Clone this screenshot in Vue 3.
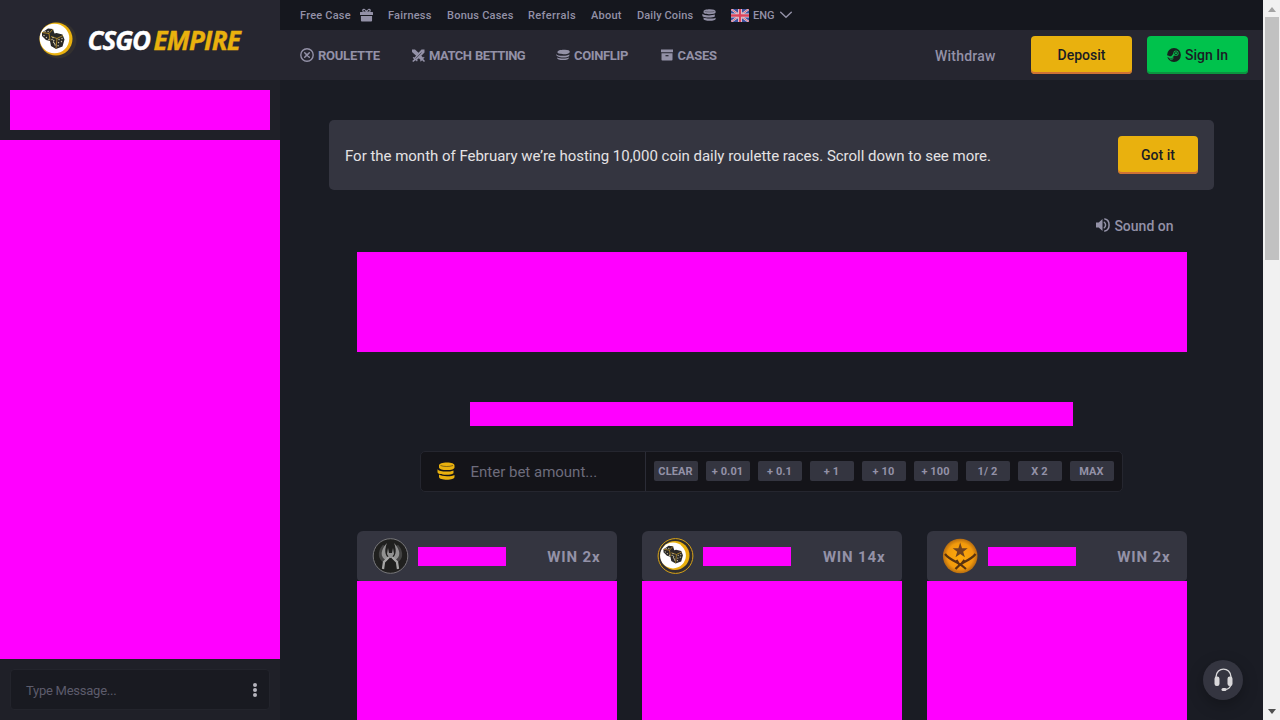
<script setup>
const topLinks = [
  { label: 'Free Case', w: 88, icon: 'gift' },
  { label: 'Fairness', w: 59 },
  { label: 'Bonus Cases', w: 81 },
  { label: 'Referrals', w: 63 },
  { label: 'About', w: 46 },
  { label: 'Daily Coins', w: 93.5, icon: 'coins' },
]
const games = [
  { label: 'ROULETTE', icon: 'roulette', w: 112 },
  { label: 'MATCH BETTING', icon: 'swords', w: 144 },
  { label: 'COINFLIP', icon: 'flip', w: 104.5 },
  { label: 'CASES', icon: 'box', w: 80.5 },
]
const chips = ['CLEAR', '+ 0.01', '+ 0.1', '+ 1', '+ 10', '+ 100', '1/ 2', 'X 2', 'MAX']
const bets = [
  { coin: 'ct', win: 'WIN 2x' },
  { coin: 'dice', win: 'WIN 14x' },
  { coin: 't', win: 'WIN 2x' },
]
</script>

<template>
  <div class="app">
    <svg class="defs" width="0" height="0">
      <defs>
        <radialGradient id="amber"><stop offset="0" stop-color="#ffa90c" /><stop offset=".75" stop-color="#f29a0c" /><stop offset="1" stop-color="#b56c10" /></radialGradient>
        <radialGradient id="steel"><stop offset="0" stop-color="#777" /><stop offset=".6" stop-color="#353535" /><stop offset="1" stop-color="#1c1c1c" /></radialGradient>
        <symbol id="dice" viewBox="0 0 24 22">
          <path fill="#292827" d="M1 5 7 1l5 .5 1.500 4.500 2-.5 6 1.500 2 5-2 7-6.500 2.500-5-3-1-5-4-1-4-4z" />
          <path fill="none" stroke="#c99c2c" stroke-width=".8" d="m1 5 7 1 4-4.500M8 6l1 7M10 9l6 2 6-3M16 11l-1 10" />
          <path fill="none" stroke="#c9bfa4" stroke-width="1.400" stroke-linecap="round" stroke-dasharray=".1 3" d="M4 4h6M3 8l5 4M11 12l4 7M18 12l-1 7M21 11l-1 6M12 10l2 8" />
        </symbol>
        <symbol id="coins" viewBox="0 0 18 18">
          <path fill="currentColor" d="M2 3.400C2 1.600 5.500.5 10 .5s7.500 1.100 7.500 2.900v2C17.500 7 14.200 8 10 8S2 7 2 5.400zM.500 7.200C2 9 5 9.600 9 9.600c3 0 5.500-.4 7.500-1.200v2.800c-1.500 1-4 1.600-7.500 1.600-4.700 0-8.500-1-8.500-2.800zM2 12.600c2 1.200 4.500 1.700 8 1.700s6-.4 7.500-1.300V15c0 1.700-3.300 2.700-7.500 2.700S2 16.600 2 14.900z" />
          <path fill="none" stroke="#17181d" stroke-width=".5" d="M3.500 3.500c3 1.300 9 1.400 12.500 0" />
        </symbol>
      </defs>
    </svg>

    <aside class="side">
      <div class="brand">
        <svg class="mark" viewBox="0 0 40 40" width="40" height="40">
          <circle cx="20" cy="20" r="18.500" fill="#34312f" />
          <circle cx="18" cy="19" r="16.500" fill="#e9b10e" />
          <circle cx="16.500" cy="18.500" r="14.800" fill="#fff" />
          <use href="#dice" x="2.500" y="7.500" width="25" height="22" />
        </svg>
        <div class="word"><span class="w1">CSGO</span><span class="w2">EMPIRE</span></div>
      </div>
      <div class="sideblock"></div>
      <div class="chat"></div>
      <div class="typer"><div class="field"><span class="tm">Type Message...</span><i class="dots"></i></div></div>
    </aside>

    <main class="page">
      <nav class="top">
        <div v-for="l in topLinks" :key="l.label" class="tl" :style="{ width: l.w + 'px' }">
          <span :class="['tlt', l.label.toLowerCase().replace(' ', '-')]">{{ l.label }}</span>
          <svg v-if="l.icon === 'gift'" class="gi" viewBox="0 0 14 14" width="13" height="14" preserveAspectRatio="none"><path fill="#9391a7" d="M.5 4H3C1.300 2 3 .3 5 1l2 1.500L9 1c2-.7 3.700 1 2 3h2.500q.5 0 .5.500V7H0V4.500q0-.5.500-.5zM1 8h12v4.500q0 1-1 1H2q-1 0-1-1z" /><path d="M4 3.500c-1-1 0-2 1.200-1.200L6.200 3.500zM10 3.500c1-1 0-2-1.200-1.200L7.800 3.500z" fill="#17191f" /></svg>
          <svg v-if="l.icon === 'coins'" class="gi" width="14" height="12" viewBox="0 0 18 18" preserveAspectRatio="none"><use href="#coins" width="18" height="18" /></svg>
        </div>
        <svg class="flag" viewBox="0 0 18 13" width="18" height="13">
          <path fill="#4255a8" d="M0 0h18v13H0z" />
          <path stroke="#f2edf5" stroke-width="2" d="m0 0 18 13M18 0 0 13" />
          <path stroke="#ec4861" stroke-width=".8" d="m0 0 18 13M18 0 0 13" />
          <path stroke="#f2edf5" stroke-width="4" d="M9 0v13M0 6.500h18" />
          <path stroke="#ec4861" stroke-width="2.400" d="M9 0v13M0 6.500h18" />
        </svg>
        <span class="eng">ENG</span>
        <svg width="12" height="8" viewBox="0 0 12 8"><path d="m.7 1.200 5.300 5 5.300-5" fill="none" stroke="#9391a7" stroke-width="1.400" stroke-linecap="round" /></svg>
      </nav>

      <nav class="bar">
        <div v-for="g in games" :key="g.label" class="game" :style="{ width: g.w + 'px' }">
          <svg v-if="g.icon === 'roulette'" width="14" height="14" viewBox="0 0 14 14" fill="none" stroke="#9391a7"><circle cx="7" cy="7" r="6.200" stroke-width="1.400" /><path stroke-width="1.500" stroke-linecap="round" d="m4.700 4.700 4.600 4.600M9.300 4.700 4.700 9.300" /><circle cx="7" cy="7" r="1.300" fill="#9391a7" stroke="none" /></svg>
          <svg v-if="g.icon === 'swords'" width="13" height="13" viewBox="0 0 13 13"><path fill="#9391a7" d="M0 .5h3l3.500 3.200L9.500.5H12.500v3L9.300 6.700 11 8.500l1-.7.500.8-1.300 1.500 1.800 1.800-1 1-1.900-1.700-1.300 1.300-.8-.6.600-1-1.800-1.700-1.700 1.600.6 1-.8.8-1.300-1.300L1.200 13l-1-1 1.900-1.800L.7 8.700l.7-.7 1.100.5 1.600-1.800L0 3z" /><path d="m3.500 9.700 6-6.200" stroke="#262630" stroke-width=".6" /></svg>
          <svg v-if="g.icon === 'flip'" width="14" height="12" viewBox="0 0 14 12" fill="#9391a7"><path d="M1.500 2.800C2 1 6 .8 9 .8s5 .9 4.800 2.100c-.3 1.600-3 2.300-6.300 2.300S.7 4.500 1.500 2.800zM0 5.200c1.500 1.200 4 1.600 7 1.500 3 0 5-.4 6.500-1.300l-.3 1.500C12 8 10 8.400 7 8.400 3 8.400 0 7 0 5.200zM1 8.400c3 1.300 9 1.500 12 .1.200 1.600-2.500 2.600-6 2.600-3.600 0-6-1-6-2.700z" /></svg>
          <svg v-if="g.icon === 'box'" width="12" height="12" viewBox="0 0 12 12"><path fill="#9391a7" d="M0 .5h12v2.800H0zM.5 4.200h11v6.500q0 .8-.8.8H1.300q-.8 0-.8-.8z" /><path stroke="#262630" stroke-width="1.200" d="M4.500 6.700h3" /></svg>
          <span :class="['gt', g.icon]">{{ g.label }}</span>
        </div>
        <span class="withdraw">Withdraw</span>
        <button class="btn dep"><span class="dept">Deposit</span></button>
        <button class="btn green">
          <svg width="14" height="14" viewBox="0 0 14 14"><circle cx="7" cy="7" r="6.900" fill="#17211f" /><path d="m0 8 4.300 1.700 3-3.800" fill="none" stroke="#08b94c" stroke-width="1.700" /><circle cx="9" cy="5.200" r="2.600" fill="#08b94c" /><circle cx="9" cy="5.200" r="1.500" fill="#08b94c" stroke="#17211f" stroke-width=".8" /><circle cx="4.400" cy="10" r="1.600" fill="none" stroke="#08b94c" stroke-width=".8" /></svg>
          <span class="sign">Sign In</span>
        </button>
      </nav>

      <section class="notice">
        <span class="msg">For the month of February we’re hosting 10,000 coin daily roulette races. Scroll down to see more.</span>
        <button class="btn got"><span class="gott">Got it</span></button>
      </section>

      <section class="wheel">
        <div class="sound">
          <svg width="15" height="14" viewBox="0 0 15 14"><path fill="#9391a7" d="M1 4.500h2.700L7.500 1v12L3.700 9.500H1z" /><path fill="none" stroke="#9391a7" stroke-width="1.500" stroke-linecap="round" d="M9.300 4.200c1.700 1.500 1.700 4.100 0 5.600M9.800 1c5.700 1 5.700 11 0 12" /></svg>
          <span class="st">Sound on</span>
        </div>
        <div class="reel"></div>
        <div class="history"></div>
        <div class="betbar">
          <div class="input"><svg width="18" height="18" class="bc" viewBox="0 0 18 18"><use href="#coins" width="18" height="18" /></svg><span class="enter">Enter bet amount...</span></div>
          <div class="chips"><span v-for="c in chips" :key="c" class="chip">{{ c }}</span></div>
        </div>
        <div class="cards">
          <article v-for="(b, i) in bets" :key="i" class="card">
            <header class="head">
              <svg v-if="b.coin === 'ct'" width="37" height="36" viewBox="0 0 36 36"><circle cx="18" cy="18" r="17.300" fill="#20201f" stroke="#77777a" stroke-width="1" /><path fill="none" stroke="#5c5c5c" stroke-width="4" opacity=".6" d="M12 8C6 15 8 21 13 23M24 8c6 7 4 13-1 15" /><path fill="#929292" d="M14.500 5C8 12 7 19 14 22.500l2-2.500c-4-3-4-9-1.500-15zM21.500 5C28 12 29 19 22 22.500L20 20c4-3 4-9 1.500-15zM15.500 10l1 5h3l1-5 1 6-2.500 4h-2l-2.500-4z" /><path d="m16.500 19-5 5-1 7M19.500 19l5 5 1 7" fill="none" stroke="#a6a6a6" stroke-width="2.300" /></svg>
              <svg v-if="b.coin === 'dice'" width="37" height="36" viewBox="0 0 36 36"><circle cx="18" cy="18" r="17.400" fill="#302e2e" stroke="#d8a316" stroke-width="1" /><circle cx="17.500" cy="17.500" r="14.500" fill="#e9b10e" /><circle cx="15.500" cy="17.500" r="12.900" fill="#fff" /><use href="#dice" x="5" y="7" width="21" height="19" /></svg>
              <svg v-if="b.coin === 't'" width="37" height="36" viewBox="0 0 36 36"><circle cx="17.700" cy="18" r="17.300" fill="url(#amber)" /><path fill="#6f421e" d="m17.700 4.500 1.800 5.800h5.700l-4.500 3.500 1.700 5.500-4.700-3.300-4.700 3.300 1.700-5.500-4.500-3.500h5.700z" /><path fill="none" stroke="#59330f" stroke-width="2.200" d="M2.500 16c3 4 7 6 12 8.500 4 2 6 4 9 6.500M33 16c-3 4-7 6-12 8.500-4 2-6 4-8 6.500M14 22l3 5M22 22l-4 5" /></svg>
              <div class="mask"></div>
              <span class="win">{{ b.win }}</span>
            </header>
            <div class="fill"></div>
          </article>
        </div>
      </section>
    </main>

    <div class="scroll"><i class="up"></i><div class="thumb"></div><i class="down"></i></div>
    <div class="support"><svg width="21" height="24" viewBox="0 0 21 24"><path fill="none" stroke="#d9d8da" stroke-width="1.400" d="M3 9C3.500-1.500 17.500-1.500 18 9M18 16q-.5 5-6 5.500" /><rect x="1.500" y="8.500" width="5" height="9.500" rx="2.200" fill="#d9d8da" /><rect x="14.500" y="8.500" width="5" height="9.500" rx="2.200" fill="#d9d8da" /><rect x="8.500" y="20" width="5" height="3" rx="1.500" fill="#d9d8da" /></svg></div>
  </div>
</template>

<style>
html, body { overflow: hidden; }
</style>
<style scoped>
* { box-sizing: border-box; }
.app { width: 1280px; height: 720px; display: flex; overflow: hidden; background: #1a1c24; font-family: Roboto, "Liberation Sans", sans-serif; color: #9391a7; white-space: nowrap; }
.app span { display: inline-block; }
.defs { position: absolute; }
svg { flex: none; display: block; }
.side { width: 280px; display: flex; flex-direction: column; background: #1f2028; flex: none; }
.brand { height: 80px; background: #262630; display: flex; align-items: center; padding-left: 38px; }
.mark { width: 40px; }
.word { display: flex; align-items: center; margin-left: 9.500px; font: italic 700 26px/30px "Open Sans", sans-serif; color: #fff; -webkit-text-stroke: .4px currentColor; }
.w1 { width: 66px; letter-spacing: -1px; }
.w2 { color: #e9b10e; letter-spacing: -.75px; }
.sideblock { height: 40px; margin: 10px; background: #f0f; }
.chat { height: 519px; background: #f0f; }
.typer { flex: 1; padding: 10px; }
.field { height: 41px; background: #191a21; border: 1px solid #23242c; border-radius: 4px; display: flex; align-items: center; justify-content: space-between; padding: 0 12px 0 15px; color: #5d5c6c; font-size: 13px; }
.tm { letter-spacing: -.25px; padding-top: 1px; }
.dots { width: 4px; height: 4px; border-radius: 50%; background: #b5b4bd; box-shadow: 0 -5px #b5b4bd, 0 5px #b5b4bd; }
.page { width: 983px; flex: none; }
.top { height: 30px; background: #15171e; padding-left: 20px; display: flex; align-items: center; font-size: 11px; font-weight: 500; }
.tl { display: flex; align-items: center; flex: none; }
.tlt { letter-spacing: .22px; }
.tlt.referrals { letter-spacing: .4px; }
.tlt.daily-coins { letter-spacing: .12px; }
.gi { margin-left: auto; margin-right: 15px; }
.flag { margin-right: 4.500px; opacity: .92; }
.eng { width: 26.500px; }
.bar { height: 50px; background: #262630; padding-left: 20px; display: flex; align-items: center; font-size: 13px; font-weight: 700; }
.game { display: flex; align-items: center; gap: 4px; flex: none; }
.gt { letter-spacing: -.25px; }
.gt.swords { letter-spacing: -.53px; word-spacing: 1px; }
.gt.flip { letter-spacing: -.36px; }
.gt.box { padding-left: 1px; }
.withdraw { font-size: 14px; font-weight: 500; margin-left: 194px; width: 96px; letter-spacing: .22px; padding-top: 1px; flex: none; }
.btn { border: 0; border-radius: 4px; font: 500 14px/18px Roboto, sans-serif; color: #1a1c24; height: 38px; display: flex; align-items: center; justify-content: center; gap: 4px; padding: 0; background: #e9b10e; box-shadow: inset 0 -2px #cf7235; flex: none; }
.dep { width: 101px; margin-right: 15px; }
.green { width: 101px; background: #00c24c; box-shadow: inset 0 -2px #0b963f; }
.notice { margin: 40px 49px 0; width: 885px; height: 70px; background: #343540; border-radius: 5px; display: flex; align-items: center; justify-content: space-between; padding: 0 16px; }
.msg { color: #e4e2e4; font-size: 15px; letter-spacing: -.018px; padding-top: 2px; }
.got { width: 80px; }
.wheel { margin-left: 76.500px; width: 830px; }
.sound { height: 62px; padding: 10px 13px 0 0; display: flex; justify-content: flex-end; align-items: center; gap: 4px; font-size: 14px; font-weight: 500; }
.sound svg { margin-top: -2px; }
.reel { height: 100px; background: #f0f; }
.history { height: 24px; width: 603px; margin: 50px auto 25px; background: #f0f; }
.betbar { width: 703px; height: 41px; margin-left: 63px; border: 1px solid #25262f; border-radius: 5px; background: #141419; display: flex; }
.input { width: 225px; border-right: 1px solid #2b2c36; display: flex; align-items: center; padding-left: 16px; color: #6d6c7c; font-size: 15px; }
.bc { color: #e9b10e; margin: -2px 16px 0 0; }
.chips { display: flex; align-items: center; gap: 8px; padding: 0 0 1px 8px; }
.chip { width: 44px; height: 20px; background: #343540; border-radius: 2px; text-align: center; font-size: 11px; font-weight: 700; line-height: 21px; letter-spacing: .1px; flex: none; }
.cards { margin-top: 39px; display: grid; grid-template-columns: repeat(3, 260px); gap: 25px; }
.head { height: 50px; background: #343540; border-radius: 6px 6px 4px 4px; display: flex; align-items: center; padding: 0 16px 0 15px; }
.mask { width: 88px; height: 19px; background: #f0f; margin-left: 9px; }
.win { margin-left: auto; font-size: 15px; font-weight: 700; letter-spacing: .85px; padding-top: 2px; }
.fill { height: 139px; background: #f0f; }
.scroll { width: 17px; height: 720px; background: #f1f1f1; padding: 0 2px; display: flex; flex-direction: column; align-items: center; flex: none; }
.thumb { width: 14px; height: 243px; margin-top: 5px; background: #c1c1c1; }
.up { margin-top: 7px; border: 4px solid transparent; border-top: 0; border-bottom: 5px solid #a3a3a3; }
.down { margin: auto 0 6px; border: 4px solid transparent; border-bottom: 0; border-top: 5px solid #505050; }
.support { position: absolute; left: 1203px; top: 660px; width: 40px; height: 40px; border-radius: 50%; background: #343540; display: flex; align-items: center; justify-content: center; box-shadow: 0 5px 15px #0004; }
</style>
